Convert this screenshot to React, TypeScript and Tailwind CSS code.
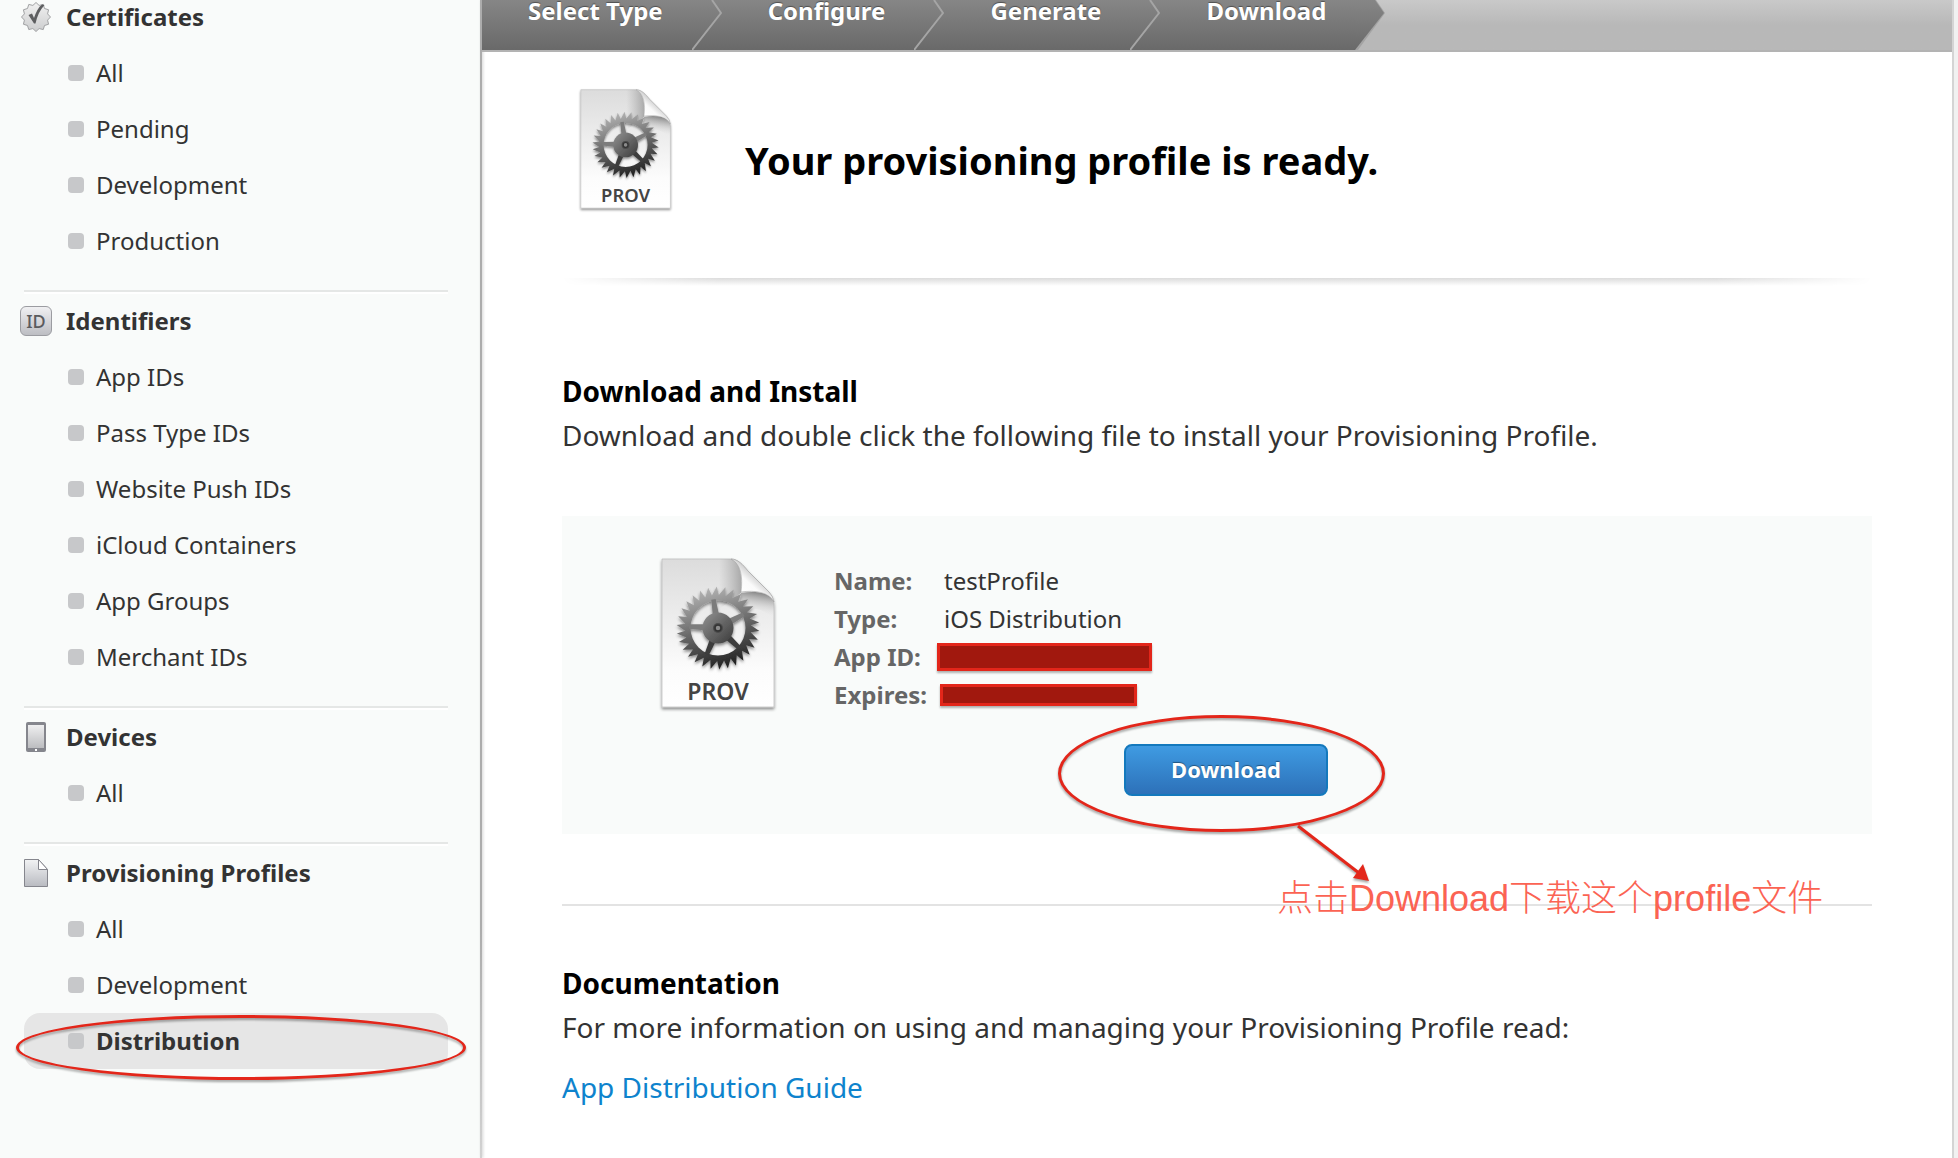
import React from "react";

const RED = "#e3261a";

function CertificateIcon() {
  const pts = Array.from({ length: 24 }, (_, i) => {
    const r = i % 2 ? 12 : 14.5;
    const a = (i * Math.PI) / 12 - Math.PI / 2;
    return `${15 + r * Math.cos(a)},${15 + r * Math.sin(a)}`;
  }).join(" ");
  return (
    <svg width="30" height="30" viewBox="0 0 30 30" aria-hidden="true">
      <defs>
        <linearGradient id="seal" x1="0" y1="0" x2="0" y2="1">
          <stop offset="0" stopColor="#f1f1f1" />
          <stop offset="1" stopColor="#cccdce" />
        </linearGradient>
      </defs>
      <polygon points={pts} fill="url(#seal)" stroke="#a0a1a3" strokeWidth="1" />
      <path d="M7.500 13L11 11.500L13 16C15 10 17.500 5 21 2.500L23.500 3C19 8 16 14 14.500 21.500L13 21.500Z" fill="#5d5e60" />
    </svg>
  );
}

function IdIcon() {
  return (
    <span
      aria-hidden="true"
      className="flex h-[30px] w-8 items-center justify-center rounded-md border border-[#9b9ca1] bg-linear-to-b from-[#f0f0f2] to-[#bdbec3] text-lg leading-none font-medium text-[#5a5b5e]"
    >
      ID
    </span>
  );
}

function DeviceIcon() {
  return (
    <svg width="20" height="30" viewBox="0 0 20 30" aria-hidden="true">
      <defs>
        <linearGradient id="screen" x1="0" y1="0" x2="0" y2="1">
          <stop offset="0" stopColor="#efeff0" />
          <stop offset="1" stopColor="#bcbdc0" />
        </linearGradient>
      </defs>
      <rect width="20" height="30" rx="2" fill="#85868d" />
      <rect x="2" y="3" width="16" height="23" fill="url(#screen)" />
      <rect x="9" y="27" width="2" height="2" fill="#fff" />
    </svg>
  );
}

function PageIcon() {
  return (
    <svg width="24" height="28" viewBox="0 0 24 28" aria-hidden="true">
      <defs>
        <linearGradient id="page" x1="0" y1="0" x2="0" y2="1">
          <stop offset="0" stopColor="#f2f3f4" />
          <stop offset="1" stopColor="#b9bbc1" />
        </linearGradient>
      </defs>
      <path d="M.5.5h14l9 10v17H.5z" fill="url(#page)" stroke="#85868d" />
      <path d="M14.500.5v10h9z" fill="#fff" stroke="#85868d" />
    </svg>
  );
}

function ProvIcon({ id, className }: { id: string; className: string }) {
  const teeth = 30;
  const gear = Array.from({ length: teeth * 2 }, (_, i) => {
    const r = i % 2 ? 33 : 41.5;
    const a = (i * Math.PI) / teeth - Math.PI / 2 - 0.08 + (i % 2 ? 0 : 0.05);
    return `${i ? "L" : "M"}${(57 + r * Math.cos(a)).toFixed(2)} ${(69 + r * Math.sin(a)).toFixed(2)}`;
  }).join("");
  const hole = "M84.500 69A27.500 27.500 0 1 0 29.500 69A27.500 27.500 0 1 0 84.500 69Z";
  const spokes = [-99, -28, 43, 113, 183];
  return (
    <svg className={className} viewBox="-5 -3 125 158" role="img" aria-label="PROV">
      <defs>
        <linearGradient id={`${id}-paper`} x1="0" y1="0" x2="0" y2="1">
          <stop offset="0" stopColor="#dcdcdc" />
          <stop offset="0.75" stopColor="#fcfcfc" />
          <stop offset="1" stopColor="#fff" />
        </linearGradient>
        <linearGradient id={`${id}-gear`} gradientUnits="userSpaceOnUse" x1="45" y1="28" x2="68" y2="110">
          <stop offset="0" stopColor="#b5b5b5" />
          <stop offset="0.5" stopColor="#686868" />
          <stop offset="1" stopColor="#1c1c1c" />
        </linearGradient>
        <linearGradient id={`${id}-hub`} x1="0" y1="0" x2="1" y2="1">
          <stop offset="0" stopColor="#929292" />
          <stop offset="1" stopColor="#3a3a3a" />
        </linearGradient>
        <linearGradient id={`${id}-curl`} gradientUnits="userSpaceOnUse" x1="80" y1="36" x2="96" y2="18">
          <stop offset="0" stopColor="#fff" />
          <stop offset="0.6" stopColor="#fafafa" />
          <stop offset="1" stopColor="#cfcfcf" />
        </linearGradient>
        <linearGradient id={`${id}-under`} gradientUnits="userSpaceOnUse" x1="100" y1="32" x2="96" y2="56">
          <stop offset="0" stopColor="#777" />
          <stop offset="1" stopColor="#eee" stopOpacity="0" />
        </linearGradient>
        <linearGradient id={`${id}-fold`} gradientUnits="userSpaceOnUse" x1="58" y1="0" x2="81" y2="0">
          <stop offset="0" stopColor="#aaa" stopOpacity="0" />
          <stop offset="1" stopColor="#999" />
        </linearGradient>
        <filter id={`${id}-shadow`} x="-10%" y="-10%" width="120%" height="120%">
          <feDropShadow dx="0" dy="2" stdDeviation="1.500" floodColor="#000" floodOpacity="0.45" />
        </filter>
      </defs>
      <path
        d="M1 0H70C77 0 82 6 87 12L108 33Q113 38 113 45V148H1Z"
        fill={`url(#${id}-paper)`}
        stroke="#b9b9b9"
        strokeWidth="0.700"
        filter={`url(#${id}-shadow)`}
      />
      <path d="M56 0H70C80 4 81 18 80 34L58 50Z" fill={`url(#${id}-fold)`} opacity="0.800" />
      <path d="M80 34C96 31 112 34 113 45V60C104 50 92 48 78 50Z" fill={`url(#${id}-under)`} />
      <path d="M70 0C77 0 82 6 87 12L108 33Q112 37 113 43C108 33 94 31 80 33C82 18 80 5 70 0Z" fill={`url(#${id}-curl)`} stroke="#999" strokeWidth="0.500" />
      <g filter={`url(#${id}-shadow)`}>
        <path d={`${gear}Z${hole}`} fillRule="evenodd" fill={`url(#${id}-gear)`} />
        {spokes.map((deg) => (
          <path key={deg} d="M12 -3.200L29 -2.200V2.200L12 3.200Z" transform={`translate(57 69) rotate(${deg})`} fill={deg > 0 && deg < 150 ? "#3c3c3c" : "#7c7c7c"} />
        ))}
        <circle cx="57" cy="69" r="15.500" fill={`url(#${id}-hub)`} />
      </g>
      <circle cx="57" cy="69" r="5" fill="#4a4a4a" />
      <circle cx="57" cy="69" r="3" fill="#8b8b8b" stroke="#333" strokeWidth="1.500" />
      <text x="57" y="141" textAnchor="middle" fontSize="23" fontWeight="600" fill="#444">
        PROV
      </text>
    </svg>
  );
}

function Ellipse({ className }: { className: string }) {
  return (
    <span
      aria-hidden="true"
      className={`pointer-events-none absolute rounded-[50%] border-3 border-[#e3261a] drop-shadow-[0_2px_1px_rgba(0,0,0,0.35)] ${className}`}
    />
  );
}

const groups = [
  { title: "Certificates", icon: <CertificateIcon />, items: ["All", "Pending", "Development", "Production"] },
  {
    title: "Identifiers",
    icon: <IdIcon />,
    items: ["App IDs", "Pass Type IDs", "Website Push IDs", "iCloud Containers", "App Groups", "Merchant IDs"],
  },
  { title: "Devices", icon: <DeviceIcon />, items: ["All"] },
  { title: "Provisioning Profiles", icon: <PageIcon />, items: ["All", "Development", "Distribution"] },
];

function Sidebar() {
  return (
    <nav className="w-[480px] shrink-0 overflow-hidden bg-[#f9fbfa] pr-8 pl-6 text-2xl text-[#333]">
      <div className="-mt-[11px] flex flex-col">
        {groups.map((g, gi) => (
          <section
            key={g.title}
            className={
              gi < groups.length - 1
                ? "mb-px border-b-2 border-[#e5e7e6] pb-[21px] shadow-[0_2px_0_#fff]"
                : ""
            }
          >
            <h2 className="flex h-14 items-center gap-1.5 font-bold">
              <span className="-ml-3 flex w-12 justify-center">{g.icon}</span>
              {g.title}
            </h2>
            <ul>
              {g.items.map((item) => {
                const active = gi === 3 && item === "Distribution";
                return (
                  <li key={item} className="relative">
                    <a
                      href="#"
                      aria-current={active ? "page" : undefined}
                      className={`flex h-14 items-center gap-3 rounded-2xl pl-11 ${active ? "bg-[#e6e6e6] font-bold" : ""}`}
                    >
                      <span className="size-4 rounded-sm bg-[#c7c8ca]" />
                      {item}
                    </a>
                    {active && <Ellipse className="top-0.5 -right-[18px] -bottom-[11px] -left-2" />}
                  </li>
                );
              })}
            </ul>
          </section>
        ))}
      </div>
    </nav>
  );
}

const steps = ["Select Type", "Configure", "Generate", "Download"];

function StepBar() {
  return (
    <ol className="flex h-[52px] border-b-2 border-[#b3b3b3] bg-linear-to-b from-[#c9c9c9] to-[#b8b8b8] to-50% text-2xl font-bold text-white">
      {steps.map((s, i) => {
        const last = i === steps.length - 1;
        return (
          <li key={s} className="flex">
            <span className="bg-linear-to-b from-[#868686] to-[#696969] pr-[29px] pl-[46px] leading-[22px] [text-shadow:0_-1px_1px_rgba(0,0,0,0.4)]">
              {s}
            </span>
            <svg
              width="30"
              height="50"
              viewBox="0 0 30 50"
              aria-hidden="true"
              className={last ? "" : "bg-linear-to-b from-[#868686] to-[#696969]"}
            >
              <defs>
                <linearGradient id="step" x1="0" y1="0" x2="0" y2="1">
                  <stop offset="0" stopColor="#868686" />
                  <stop offset="1" stopColor="#696969" />
                </linearGradient>
              </defs>
              {last ? (
                <>
                  <path d="M0 0H21L30 13L3 50H0Z" fill="#a3a3a3" />
                  <path d="M0 0H20L29 13L0 50Z" fill="url(#step)" />
                </>
              ) : (
                <path d="M20 0L29 13L0 50" fill="none" stroke="#a5a5a5" strokeWidth="2" />
              )}
            </svg>
          </li>
        );
      })}
    </ol>
  );
}

function Row({ label, children }: { label: string; children: React.ReactNode }) {
  return (
    <div className="flex h-[38px] items-center">
      <dt className="w-[110px] shrink-0 font-bold whitespace-nowrap text-[#666]">{label}</dt>
      <dd className="flex h-full items-center">{children}</dd>
    </div>
  );
}

function ProfilePanel() {
  return (
    <section className="mt-[59px] flex h-[318px] bg-[#f9fbfa] pt-10 pl-[94px]">
      <ProvIcon id="large" className="h-[158px] w-[125px] shrink-0" />
      <div className="ml-[53px] text-2xl text-[#333]">
        <dl className="mt-[6px]">
          <Row label="Name:">testProfile</Row>
          <Row label="Type:">iOS Distribution</Row>
          <Row label="App ID:">
            <span className="-ml-[7px] h-7 w-[215px] border-3 border-[#e3261a] bg-[#a1180e] shadow-[0_2px_2px_rgba(0,0,0,0.3)]" />
          </Row>
          <Row label="Expires:">
            <span className="-ml-1 h-[22px] w-[197px] border-3 border-[#e3261a] bg-[#a1180e] shadow-[0_2px_2px_rgba(0,0,0,0.3)]" />
          </Row>
        </dl>
        <div className="relative mt-[30px] ml-[290px] w-[204px]">
          <button
            type="button"
            className="h-[52px] w-full rounded-lg border-2 border-[#1479bd] bg-linear-to-b from-[#3f9be2] to-[#2d71b9] text-[22px] font-bold text-white [text-shadow:0_-1px_1px_rgba(0,0,0,0.4)]"
          >
            Download
          </button>
          <Ellipse className="-top-[29px] -right-[57px] -bottom-9 -left-[66px]" />
          <svg
            width="80"
            height="64"
            viewBox="0 0 80 64"
            aria-hidden="true"
            className="absolute top-20 left-[172px] drop-shadow-[0_2px_1px_rgba(0,0,0,0.35)]"
          >
            <path d="M2 2L63 49" stroke={RED} strokeWidth="3" />
            <path d="M73 57L57 54L67 40Z" fill={RED} />
          </svg>
          <p className="absolute top-[128px] left-[153px] font-['Liberation_Sans','Noto_Sans_CJK_SC',sans-serif] text-4xl leading-[54px] font-light whitespace-nowrap text-[#fb6353]">
            点击Download下载这个profile文件
          </p>
        </div>
      </div>
    </section>
  );
}

export default function App() {
  return (
    <div className="flex h-screen min-h-[900px] overflow-hidden bg-white font-['Noto_Sans','Open_Sans',sans-serif]">
      <Sidebar />
      <div className="w-0.5 shrink-0 bg-linear-to-b from-[#acacac] from-80% to-[#d2d2d2] shadow-[1px_0_3px_rgba(0,0,0,0.2)]" />
      <main className="min-w-0 flex-1 border-r-2 border-[#d4d4d4] text-[28px] leading-[44px] text-[#333]">
        <StepBar />
        <div className="px-20">
          <header className="flex h-[226px] pt-[35px] pl-[14px]">
            <ProvIcon id="small" className="h-[127px] w-[100px] shrink-0" />
            <h1 className="ml-[69px] pt-[46px] text-[38px] leading-[54px] font-bold text-black">
              Your provisioning profile is ready.
            </h1>
          </header>
          <div className="h-2 bg-linear-to-b from-[#dcdcdc] to-white [mask-image:linear-gradient(to_right,transparent,black_12%,black_88%,transparent)]" />
          <h2 className="mt-[83px] font-bold text-black">Download and Install</h2>
          <p>Download and double click the following file to install your Provisioning Profile.</p>
          <ProfilePanel />
          <hr className="mt-[70px] border-t-2 border-[#e3e3e3]" />
          <h2 className="mt-[55px] font-bold text-black">Documentation</h2>
          <p>For more information on using and managing your Provisioning Profile read:</p>
          <a href="#" className="mt-4 inline-block text-[#0e83cd]">
            App Distribution Guide
          </a>
        </div>
      </main>
      <div className="w-1 shrink-0 bg-[#f1f1f1]" />
    </div>
  );
}
